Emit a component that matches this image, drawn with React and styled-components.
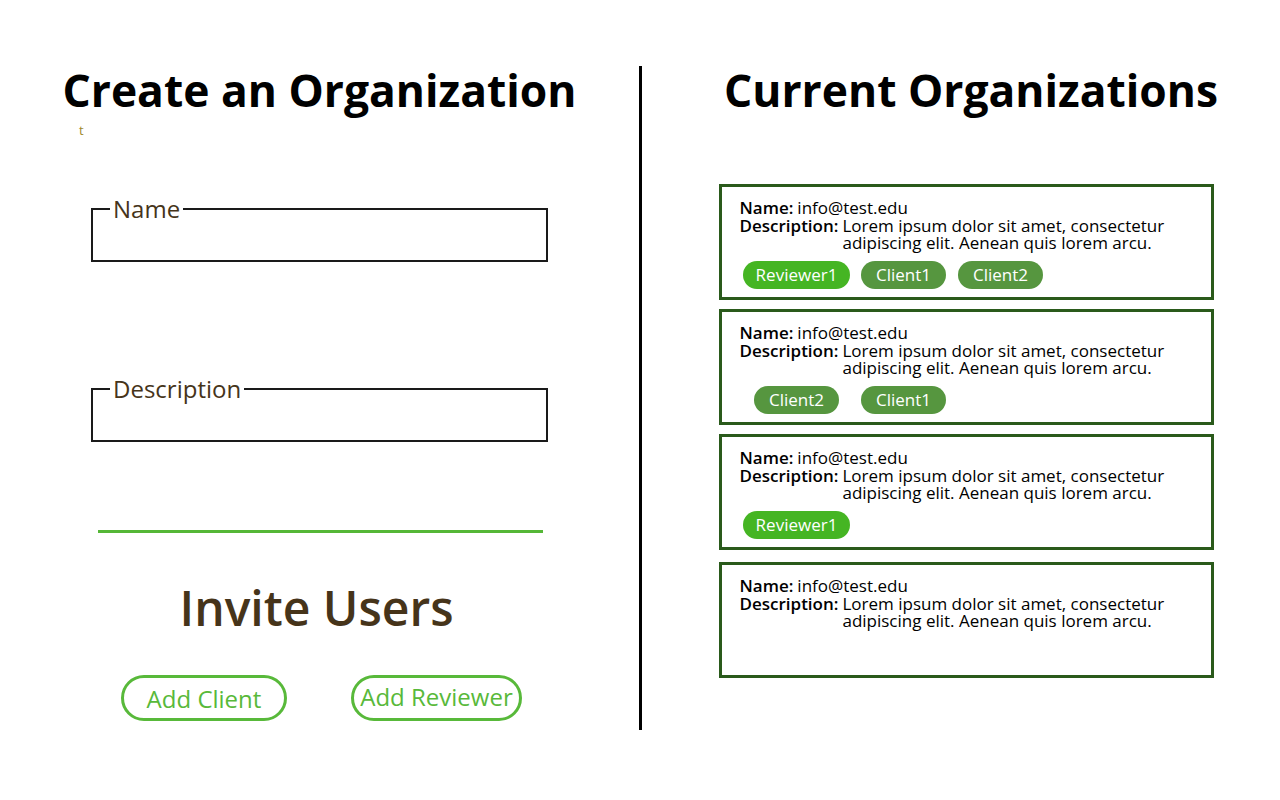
import styled, { createGlobalStyle } from 'styled-components';

const GlobalStyle = createGlobalStyle`
  html, body {
    margin: 0;
    padding: 0;
    background: #fff;
    font-family: "Open Sans", "Liberation Sans", sans-serif;
  }
`;

const orgs = [
  { name: 'info@test.edu', tags: [{ label: 'Reviewer1', kind: 'reviewer' }, { label: 'Client1' }, { label: 'Client2' }] },
  { name: 'info@test.edu', tags: [{ label: 'Client2' }, { label: 'Client1' }] },
  { name: 'info@test.edu', tags: [{ label: 'Reviewer1', kind: 'reviewer' }] },
  { name: 'info@test.edu', tags: [] },
];

const description = 'Lorem ipsum dolor sit amet, consectetur adipiscing elit. Aenean quis lorem arcu.';

const App = () => {
  return (
    <>
      <GlobalStyle />
      <Page>
        <LeftPanel>
          <Title>Create an Organization</Title>
          <ErrorText>t</ErrorText>
          <Field>
            <Legend>Name</Legend>
            <FieldInput />
          </Field>
          <Field $top={111}>
            <Legend>Description</Legend>
            <FieldInput />
          </Field>
          <GreenRule />
          <InviteTitle>Invite Users</InviteTitle>
          <ButtonRow>
            <InviteButton $width={166}>Add Client</InviteButton>
            <InviteButton $width={171} $lift>Add Reviewer</InviteButton>
          </ButtonRow>
        </LeftPanel>
        <Divider />
        <RightPanel>
          <Title $shift={10}>Current Organizations</Title>
          <OrgList>
            {orgs.map((org, key) => (
              <OrgCard key={key} $last={key === orgs.length - 1}>
                <InfoRow>
                  <InfoLabel>Name:</InfoLabel>
                  <InfoValue>{org.name}</InfoValue>
                </InfoRow>
                <InfoRow>
                  <InfoLabel>Description:</InfoLabel>
                  <InfoValue>{description}</InfoValue>
                </InfoRow>
                {org.tags.length > 0 && (
                  <TagGrid>
                    {org.tags.map((tag, i) => (
                      <Tag key={i} $reviewer={tag.kind === 'reviewer'}>
                        {tag.label}
                      </Tag>
                    ))}
                  </TagGrid>
                )}
              </OrgCard>
            ))}
          </OrgList>
        </RightPanel>
      </Page>
    </>
  );
};

export default App;

const Page = styled.div`
  display: flex;
  width: 1280px;
  height: 800px;
`;

const LeftPanel = styled.div`
  width: 639px;
  display: flex;
  flex-direction: column;
  align-items: center;
  padding-top: 58px;
`;

const RightPanel = styled.div`
  flex: 1;
  display: flex;
  flex-direction: column;
  align-items: center;
  padding-top: 58px;
  padding-left: 10px;
`;

const Divider = styled.div`
  width: 3px;
  height: 664px;
  margin-top: 66px;
  background: #000;
`;

const Title = styled.h1`
  margin: 0 0 0 ${({ $shift }) => $shift || 0}px;
  font-size: 44.4px;
  font-weight: 700;
  line-height: 64px;
  color: #000;
`;

const ErrorText = styled.div`
  align-self: flex-start;
  margin-left: 79px;
  margin-top: -1px;
  font-size: 13px;
  line-height: 18px;
  color: #a08a2e;
`;

const Field = styled.fieldset`
  box-sizing: border-box;
  width: 457px;
  margin: ${({ $top }) => ($top ? `${$top}px` : '54px')} 0 0 0;
  padding: 0 16px;
  border: 2px solid #1a1a1a;
`;

const Legend = styled.legend`
  padding: 0 3px;
  margin-left: 1px;
  font-size: 24px;
  line-height: 32px;
  color: #46341a;
`;

const FieldInput = styled.input`
  display: block;
  width: 100%;
  height: 33px;
  border: none;
  outline: none;
  background: transparent;
  font-family: inherit;
  font-size: 18px;
`;

const GreenRule = styled.div`
  width: 445px;
  height: 3px;
  margin: 88px 0 0 2px;
  background: #55b737;
`;

const InviteTitle = styled.h2`
  margin: 42px 6px 0 0;
  font-size: 48px;
  font-weight: 600;
  line-height: 66px;
  color: #46341a;
`;

const ButtonRow = styled.div`
  display: flex;
  gap: 64px;
  margin: 34px 0 0 4px;
`;

const InviteButton = styled.div`
  box-sizing: border-box;
  width: ${({ $width }) => $width}px;
  height: 46px;
  border: 3px solid #58b93a;
  border-radius: 23px;
  display: flex;
  align-items: center;
  justify-content: center;
  padding-bottom: ${({ $lift }) => ($lift ? '4px' : '0')};
  font-size: 24px;
  color: #58b93a;
  cursor: pointer;
  user-select: none;
  white-space: nowrap;
`;

const OrgList = styled.div`
  display: flex;
  flex-direction: column;
  gap: 9px;
  margin-top: 62px;
`;

const OrgCard = styled.div`
  box-sizing: border-box;
  width: 495px;
  height: 116px;
  border: 3px solid #2a5a1b;
  padding: 12px 18px 0 18px;
  margin-top: ${({ $last }) => ($last ? '3px' : '0')};
`;

const InfoRow = styled.div`
  display: flex;
  font-size: 17px;
  line-height: 17.5px;
  color: #000;
`;

const InfoLabel = styled.span`
  font-weight: 600;
  margin-right: 4px;
  white-space: nowrap;
`;

const InfoValue = styled.span`
  flex: 1;
  padding-right: 20px;
`;

const TagGrid = styled.div`
  display: grid;
  grid-template-columns: 114px 100px 94px;
  justify-items: center;
  margin-top: 9px;
`;

const Tag = styled.div`
  height: 28px;
  padding: 0 ${({ $reviewer }) => ($reviewer ? '13px' : '15px')};
  border-radius: 14px;
  display: flex;
  align-items: center;
  font-size: 17px;
  color: #fff;
  background: ${({ $reviewer }) => ($reviewer ? '#45b523' : '#56963f')};
`;
